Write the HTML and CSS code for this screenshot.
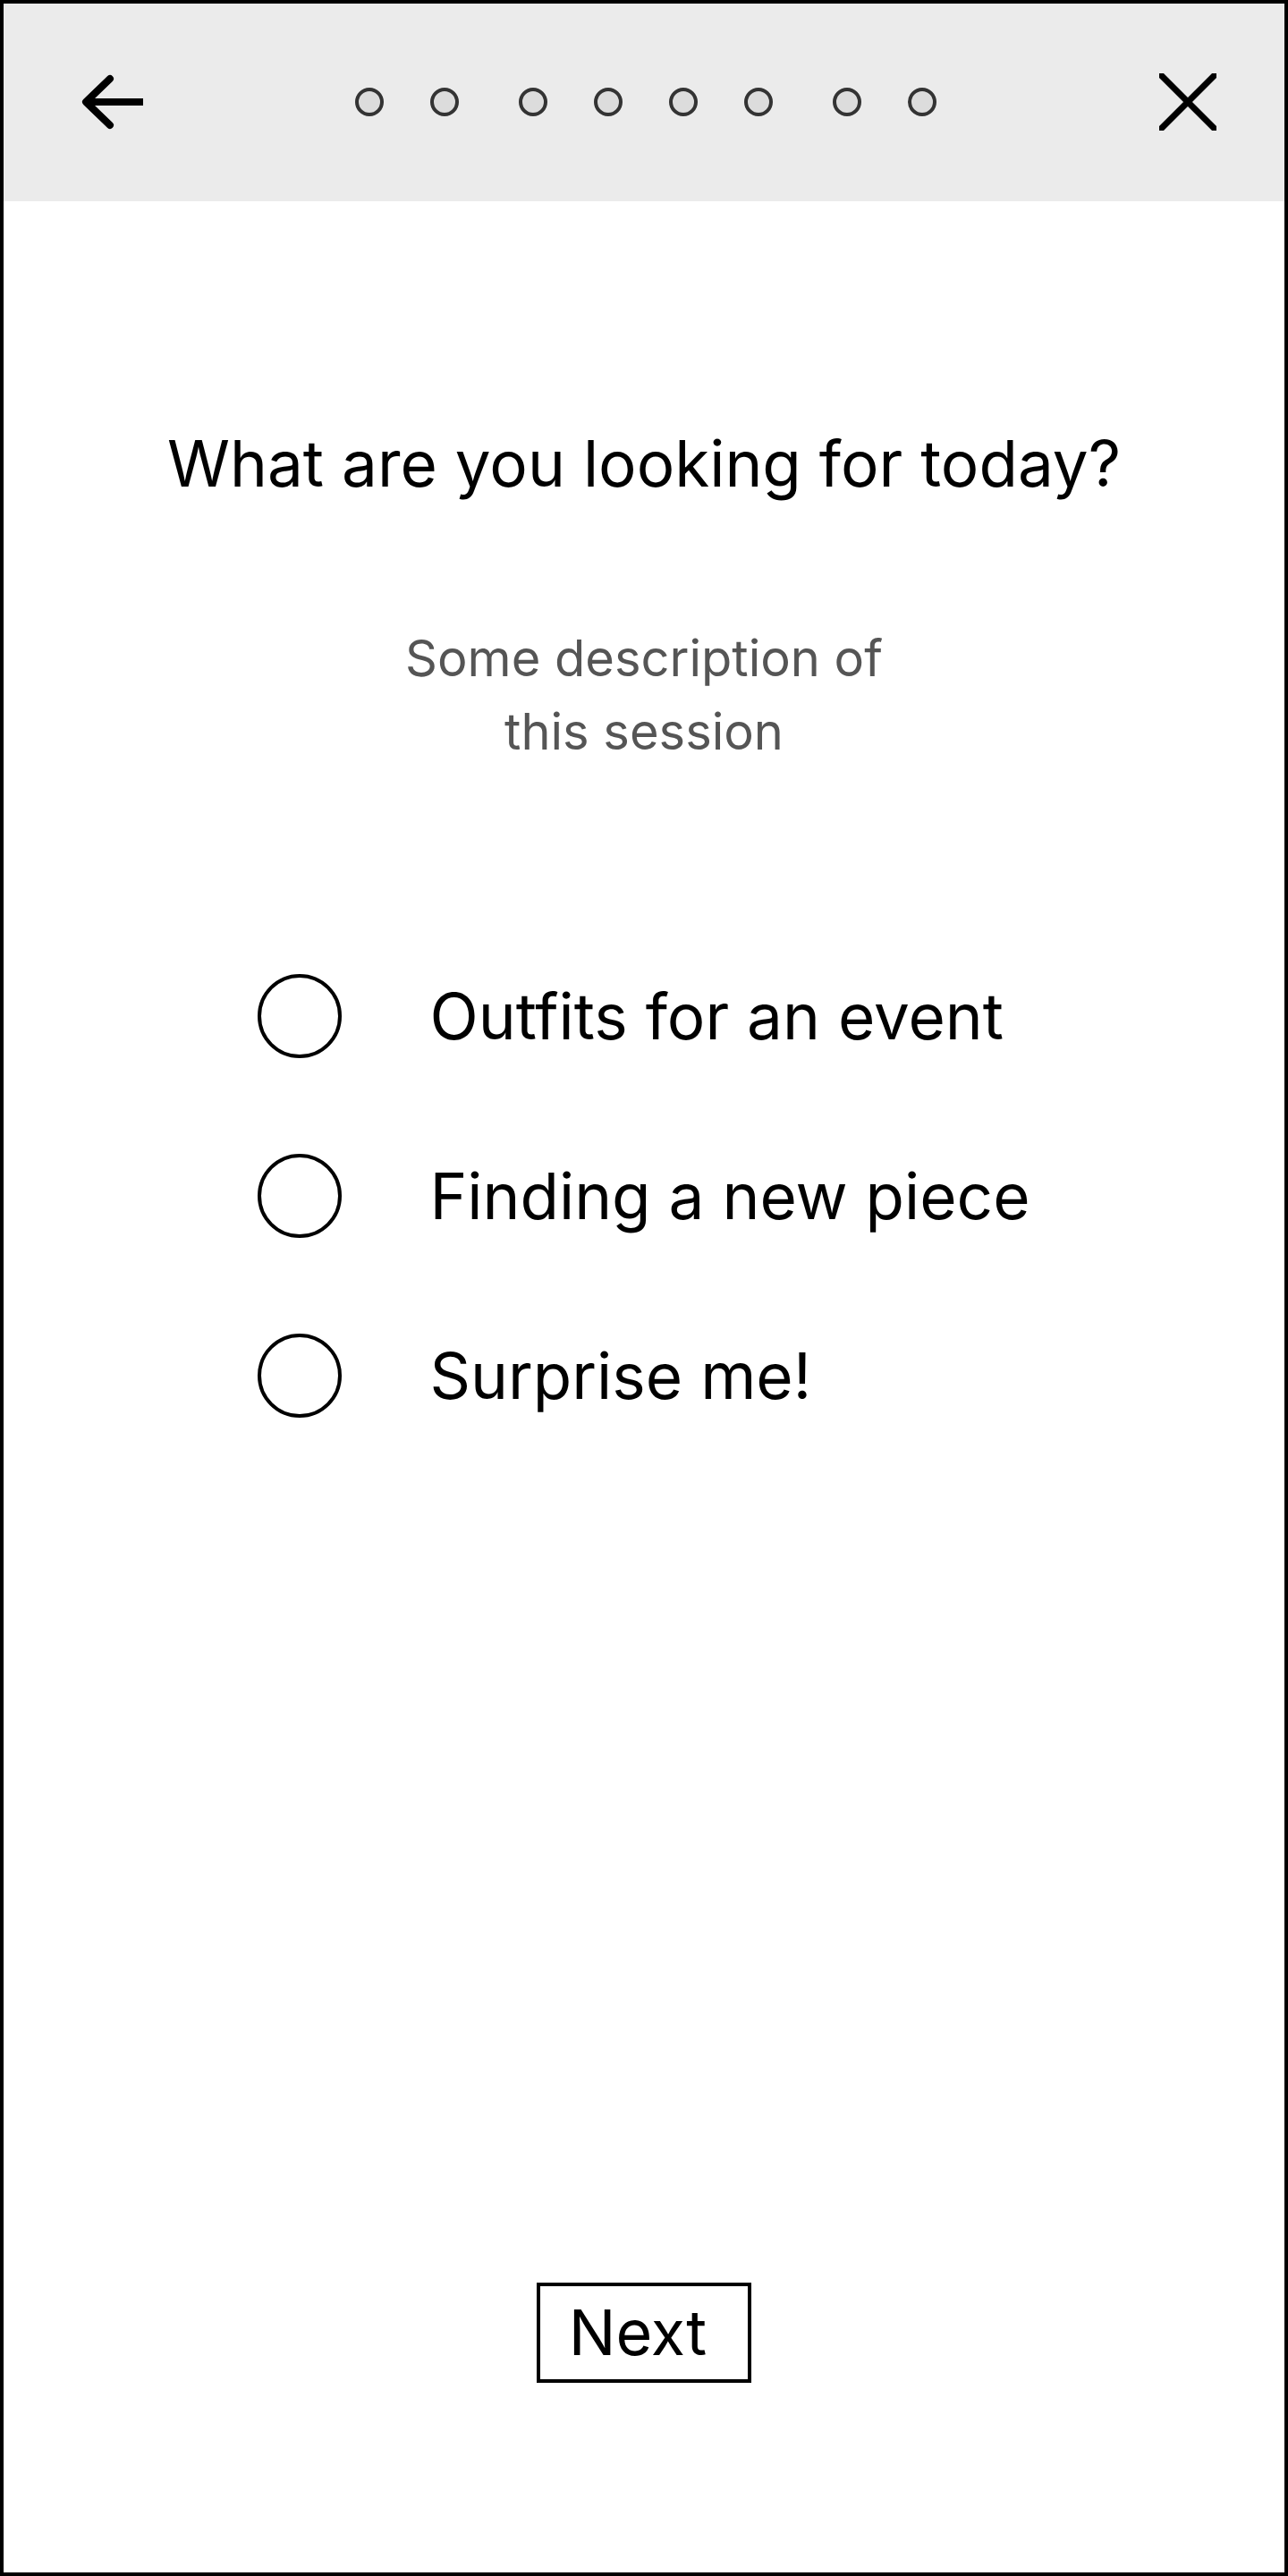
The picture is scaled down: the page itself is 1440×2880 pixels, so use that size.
FILE: index.html
```html
<!DOCTYPE html>
<html lang="en">
<head>
  <meta charset="UTF-8">
  <meta name="viewport" content="width=device-width, initial-scale=1.0">
  <title>Session Setup</title>
  <link rel="stylesheet" href="styles.css">
</head>
<body>

  <div class="frame">
    <!-- Top bar: back, progress, close -->
    <div class="topbar">
      <button class="icon-btn back-btn" aria-label="Back">
        <svg width="72" height="64" viewBox="0 0 72 64">
          <path d="M6 32 H70" stroke="#000" stroke-width="8" fill="none"/>
          <path d="M33 6 L6 32 L33 58" stroke="#000" stroke-width="8" fill="none" stroke-linecap="round" stroke-linejoin="round"/>
        </svg>
      </button>

      <div class="progress">
        <div class="dot-group">
          <span class="dot"></span>
          <span class="dot"></span>
        </div>
        <div class="dot-group">
          <span class="dot"></span>
          <span class="dot"></span>
          <span class="dot"></span>
          <span class="dot"></span>
        </div>
        <div class="dot-group">
          <span class="dot"></span>
          <span class="dot"></span>
        </div>
      </div>

      <button class="icon-btn close-btn" aria-label="Close">
        <svg width="64" height="64" viewBox="0 0 64 64">
          <path d="M-2 -2 L66 66 M66 -2 L-2 66" stroke="#000" stroke-width="7" fill="none"/>
        </svg>
      </button>
    </div>

    <!-- Question -->
    <div class="content">
      <h1 class="question">What are you looking for today?</h1>
      <p class="description">Some description of<br>this session</p>

      <div class="options">
        <label class="option">
          <span class="radio"></span>
          <span class="option-text">Outfits for an event</span>
        </label>
        <label class="option">
          <span class="radio"></span>
          <span class="option-text">Finding a new piece</span>
        </label>
        <label class="option">
          <span class="radio"></span>
          <span class="option-text">Surprise me!</span>
        </label>
      </div>

      <button class="next-btn">Next</button>
    </div>
  </div>

</body>
</html>
```

FILE: styles.css
```css
body { margin: 0; padding: 0; font-family: Inter, "Noto Sans", sans-serif; background: #fff; color: #000; }
.frame { width: 1440px; height: 2880px; box-sizing: border-box; border: 4px solid #000; display: flex; flex-direction: column; }

.topbar { height: 219px; background: #ebebeb; display: grid; grid-template-columns: 1fr auto 1fr; align-items: center; padding: 0 76px 2px 86px; }
.icon-btn { background: none; border: none; padding: 0; margin: 0; cursor: pointer; display: flex; }
.icon-btn svg { display: block; overflow: hidden; }
.back-btn { justify-self: start; }
.close-btn { justify-self: end; }

.progress { display: flex; gap: 67px; margin-right: 6px; }
.dot-group { display: flex; gap: 52px; }
.dot { width: 32px; height: 32px; box-sizing: border-box; border: 4px solid #333; border-radius: 50%; background: #dcdcdc; }

.content { flex: 1; display: flex; flex-direction: column; align-items: center; padding: 258px 0 212px; }
.question { margin: 0; font-size: 71px; font-weight: 400; line-height: 70px; text-align: center; }
.description { margin: 142px 0 0; font-size: 56px; line-height: 82px; color: #555; text-align: center; }

.options { margin-top: 230px; display: flex; flex-direction: column; gap: 107px; }
.option { display: flex; align-items: center; gap: 98px; cursor: pointer; }
.radio { width: 94px; height: 94px; box-sizing: border-box; border: 4px solid #000; border-radius: 50%; flex-shrink: 0; }
.option-text { font-size: 71px; line-height: 94px; }

.next-btn { margin-top: auto; font-family: inherit; font-size: 70px; line-height: 104px; padding: 0 46px 0 32px; background: #fff; color: #000; border: 4px solid #000; border-radius: 0; cursor: pointer; }
```
